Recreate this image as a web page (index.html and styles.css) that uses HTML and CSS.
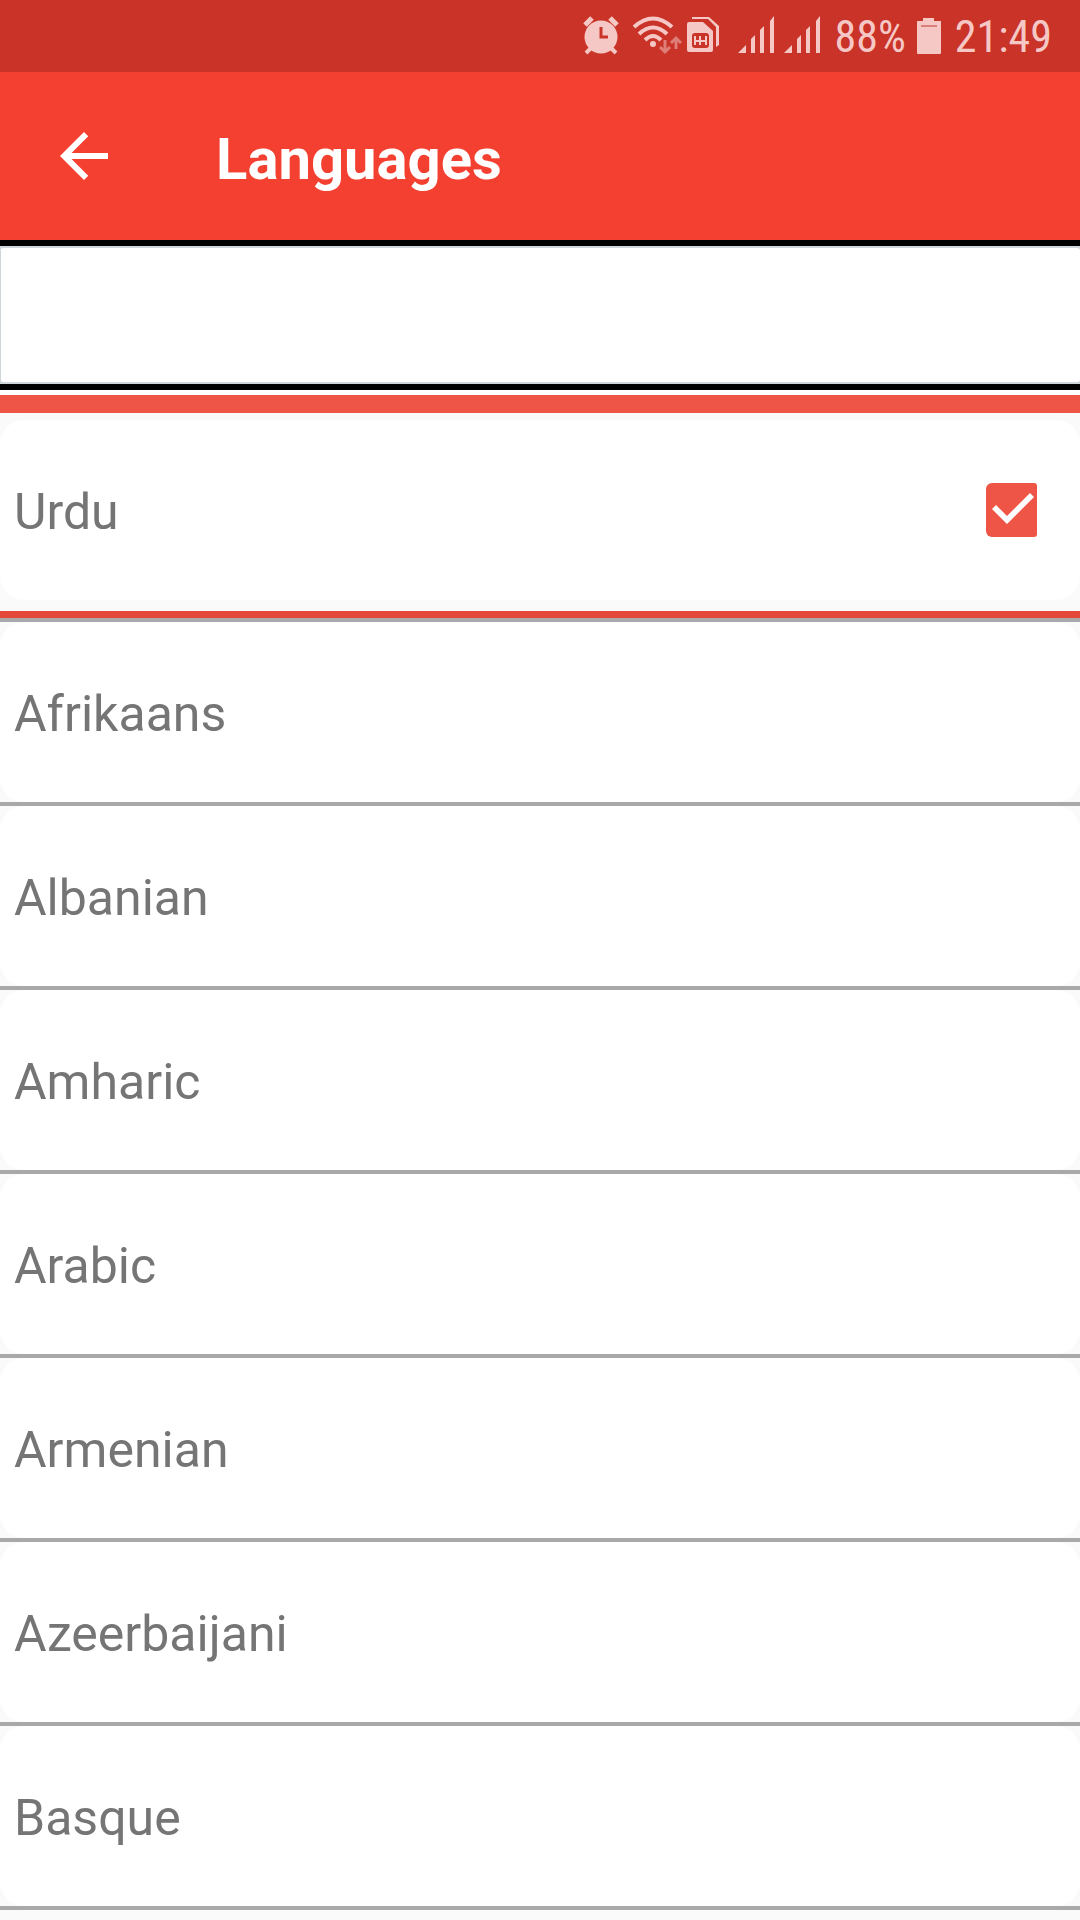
FILE: index.html
```html
<!DOCTYPE html>
<html lang="en">

<head>
    <meta charset="UTF-8">
    <meta name="viewport" content="width=device-width, initial-scale=1">
    <title>Languages</title>
    <link rel="stylesheet" href="styles.css">
</head>

<body>
    <div class="status">
        <!-- alarm -->
        <svg width="44" height="40" viewBox="0 0 44 40">
            <path d="M2 9l7-7M27 2l7 7" stroke="currentColor" stroke-width="5" />
            <path d="M8 32l-5 5M28 32l5 5" stroke="currentColor" stroke-width="4" />
            <circle cx="18" cy="21" r="16.5" fill="currentColor" />
            <path d="M18 11v10h7" fill="none" stroke="#c93328" stroke-width="3" />
        </svg>
        <!-- wifi -->
        <svg width="51" height="40" viewBox="0 0 51 40">
            <g fill="none" stroke="currentColor" stroke-width="4">
                <path d="M3 11Q22-6 41 11" />
                <path d="M8 18Q22 5 36 18" />
                <path d="M14 24Q22 16 30 24" />
            </g>
            <circle cx="22" cy="28" r="3" fill="currentColor" />
            <g fill="none" stroke="currentColor" stroke-width="3" opacity=".5">
                <path d="M34 24v12M29 31l5 5 5-5" />
                <path d="M45 33V22M40 27l5-5 5 5" />
            </g>
        </svg>
        <!-- sim cards -->
        <svg width="47" height="40" viewBox="0 0 47 40">
            <path d="M6 3V1h17l10 9v19l-3 2V11l-8-8z" fill="currentColor" />
            <path d="M3 6h14l10 9v19q0 2-2 2H3q-2 0-2-2V8q0-2 2-2z" fill="currentColor" />
            <rect x="6" y="17" width="17" height="15" rx="3" fill="#c93328" />
            <path d="M9 20v9M14 20v9M20 20v9M9 25h11" stroke="currentColor" stroke-width="2" />
        </svg>
        <!-- signal, two sims -->
        <svg width="94" height="40" viewBox="0 0 94 40">
            <g id="bars" fill="currentColor">
                <path d="M1 37l8-8v8zM14 23l4-4v18h-4zM23 14l4-4v27h-4zM33 5l4-5v37h-4z" />
            </g>
            <use href="#bars" x="46" />
        </svg>
        <span>88%</span>
        <!-- battery -->
        <svg width="26" height="40" viewBox="0 0 26 40">
            <path d="M7 2h11v3h7v32q0 1-1 1H2q-1 0-1-1V5h6z" fill="currentColor" />
            <path d="M5 10h16" stroke="#d9807a" stroke-width="2" />
        </svg>
        <span class="time">21:49</span>
    </div>

    <header class="header">
        <button class="back" type="button" aria-label="Back">
            <svg viewBox="0 0 24 24" width="72" height="72">
                <path fill="currentColor" d="M20 11H7.830l5.590-5.590L12 4l-8 8 8 8 1.410-1.410L7.830 13H20v-2z" />
            </svg>
        </button>
        <h1>Languages</h1>
    </header>

    <div class="search">
        <input type="text" aria-label="Search">
    </div>

    <div class="selected">
        <label class="item">
            <span>Urdu</span>
            <input type="checkbox" checked>
        </label>
    </div>

    <ul class="list">
        <li><div class="item">Afrikaans</div></li>
        <li><div class="item">Albanian</div></li>
        <li><div class="item">Amharic</div></li>
        <li><div class="item">Arabic</div></li>
        <li><div class="item">Armenian</div></li>
        <li><div class="item">Azeerbaijani</div></li>
        <li><div class="item">Basque</div></li>
    </ul>
</body>

</html>
```

FILE: styles.css
```css
* {
    margin: 0;
    padding: 0;
    box-sizing: border-box;
}

body {
    background-color: #fafafa;
    font-family: Roboto, "Liberation Sans", sans-serif;
    color: #757575;
}

svg {
    display: block;
    flex: none;
}

/* status bar */
.status {
    display: flex;
    align-items: center;
    justify-content: flex-end;
    gap: 4px;
    height: 72px;
    padding-right: 28px;
    background-color: #c93328;
    color: #f6c8c5;
    font-family: "Roboto Condensed", Roboto, sans-serif;
    font-size: 44px;
}

.status span {
    padding-top: 2px;
    margin-right: 6px;
}

.status .time {
    margin: 0 0 0 9px;
}

/* title bar */
.header {
    display: flex;
    align-items: center;
    gap: 96px;
    height: 168px;
    padding: 0 48px;
    background-color: #f44030;
    color: #fff;
}

.back {
    border: none;
    background: none;
    color: #fff;
    cursor: pointer;
}

.header h1 {
    padding-top: 6px;
    font-size: 58px;
    font-weight: bold;
}

/* search box */
.search {
    border-top: 6px solid #000;
    border-bottom: 6px solid #000;
    background-color: #d0d7db;
}

.search input {
    display: block;
    width: 100%;
    height: 138px;
    padding: 0 15px;
    outline: none;
    border: 2px solid #d0d7db;
    border-width: 2px 0 2px 1px;
    border-radius: 4px;
    background-color: #fff;
    font-family: inherit;
    font-size: 50px;
}

.item {
    display: flex;
    align-items: center;
    justify-content: space-between;
    padding: 62px 14px 58px;
    border-radius: 24px;
    background-color: #fff;
    font-size: 50px;
    line-height: 60px;
}

/* chosen language */
.selected {
    margin-top: 5px;
    padding: 7px 0 11px;
    border-top: 18px solid #ee5546;
    border-bottom: 7px solid #e5483a;
    box-shadow: 0 -5px #fff;
}

.selected .item {
    padding-right: 43px;
}

.selected input {
    appearance: none;
    width: 51px;
    height: 54px;
    margin-bottom: 4px;
    border-radius: 6px 3px 3px 6px;
    background-color: #ee5546;
    cursor: pointer;
}

.selected input:checked::before {
    content: "";
    display: block;
    height: 100%;
    background-color: #fff;
    clip-path: polygon(6px 26px, 10px 22px, 21px 33px, 44px 10px, 48px 14px, 21px 41px);
}

/* other languages */
.list {
    list-style: none;
    border-bottom: 4px solid #a9a9a9;
}

.list li {
    border-top: 4px solid #a9a9a9;
}
```
